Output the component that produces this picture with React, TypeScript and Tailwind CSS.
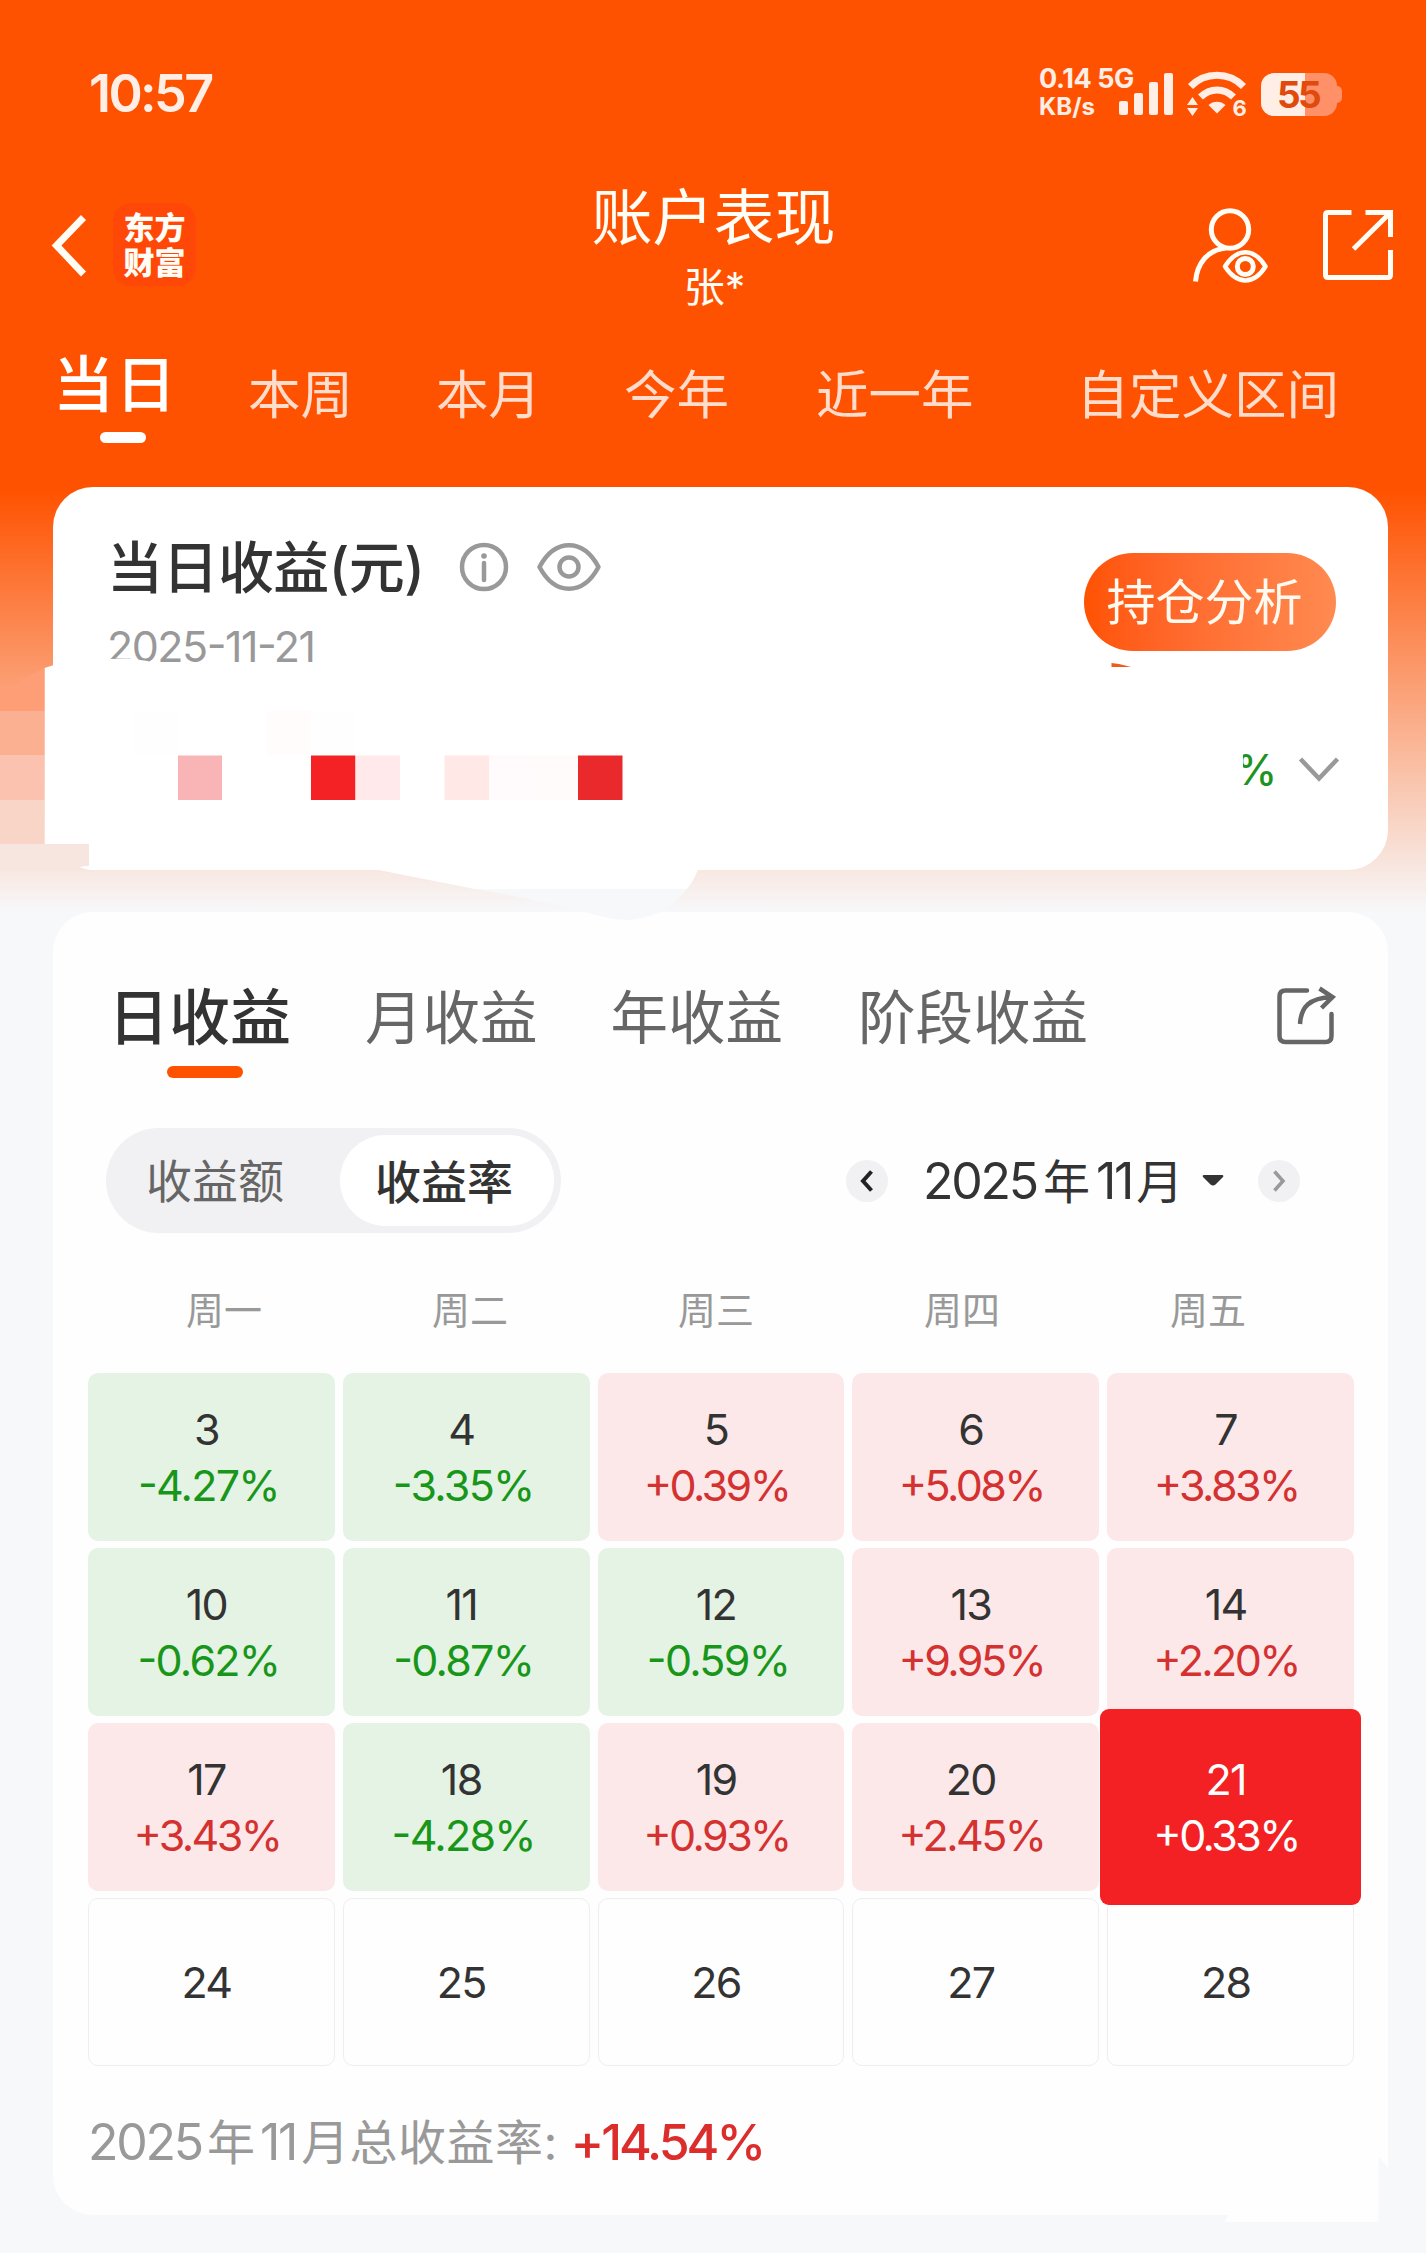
import clsx from 'clsx'

const ranges = [
  { label: '本周', className: 'ml-[73px]' },
  { label: '本月', className: 'ml-[83px]' },
  { label: '今年', className: 'ml-[83px]' },
  { label: '近一年', className: 'ml-[87px]' },
  { label: '自定义区间', className: 'ml-[103px]' },
]

const weekdays = ['周一', '周二', '周三', '周四', '周五']

const days: { day: number; rate?: string; selected?: boolean }[] = [
  { day: 3, rate: '-4.27%' },
  { day: 4, rate: '-3.35%' },
  { day: 5, rate: '+0.39%' },
  { day: 6, rate: '+5.08%' },
  { day: 7, rate: '+3.83%' },
  { day: 10, rate: '-0.62%' },
  { day: 11, rate: '-0.87%' },
  { day: 12, rate: '-0.59%' },
  { day: 13, rate: '+9.95%' },
  { day: 14, rate: '+2.20%' },
  { day: 17, rate: '+3.43%' },
  { day: 18, rate: '-4.28%' },
  { day: 19, rate: '+0.93%' },
  { day: 20, rate: '+2.45%' },
  { day: 21, rate: '+0.33%', selected: true },
  { day: 24 },
  { day: 25 },
  { day: 26 },
  { day: 27 },
  { day: 28 },
]

function StatusBar() {
  return (
    <div className="flex h-[188px] items-center justify-between pl-[89px] pr-[84px] text-[#ffeee6]">
      <span className="text-[52px] font-semibold leading-none tracking-[-0.05em]">10:57</span>
      <div className="flex items-center">
        <div className="mb-[4px] w-[80px] whitespace-nowrap font-bold">
          <div className="text-[27px] leading-[29px] tracking-[-0.015em]">0.14 5G</div>
          <div className="text-[24px] leading-[27px]">KB/s</div>
        </div>
        {/* signal */}
        <svg className="h-[46px] w-[56px]" viewBox="0 0 56 46" fill="currentColor">
          <rect x="0" y="30" width="9" height="14" rx="2" />
          <rect x="15" y="22" width="9" height="22" rx="2" />
          <rect x="30" y="11" width="9" height="33" rx="2" />
          <rect x="45" y="2" width="9" height="42" rx="2" />
        </svg>
        {/* wifi 6 */}
        <svg className="ml-[11px] h-[50px] w-[62px] overflow-visible" viewBox="0 0 62 50" fill="none" stroke="currentColor">
          <path d="M4.500 17.500C19 2.500 43 2.500 57.500 17.500" strokeWidth="7" />
          <path d="M14.500 28C24 18.500 38 18.500 47.500 28" strokeWidth="7" />
          <path d="M22.500 36C27 31.500 35 31.500 39.500 36L31 44.500Z" fill="currentColor" stroke="none" />
          <path d="M1 36 6.500 28 12 36ZM1 39 6.500 47 12 39Z" fill="currentColor" stroke="none" />
          <text x="46.500" y="47" fontSize="22" fontWeight="700" fill="currentColor" stroke="none">6</text>
        </svg>
        {/* battery */}
        <div className="ml-[13px] flex items-center">
          <div className="flex h-[43px] w-[76px] items-center justify-center rounded-[13px] bg-[linear-gradient(90deg,#ffeee6_44px,#ff9068_44px)] pr-[2px] text-[37px] font-bold leading-none tracking-[-0.07em] text-[#e04a0c]">
            55
          </div>
          <div className="h-[17px] w-[5px] rounded-r-[5px] bg-[#ff9068]" />
        </div>
      </div>
    </div>
  )
}

function Header() {
  return (
    <div className="flex h-[152px] items-start justify-between pl-[49px] pr-[29px] text-[#fffdf5]">
      <div className="flex w-[250px] items-center pt-[15px]">
        <svg className="h-[64px] w-[40px]" viewBox="0 0 40 64" fill="none" stroke="currentColor" strokeWidth="7">
          <path d="M34.500 4.500 7.500 32.500 34.500 61" />
        </svg>
        <div className="ml-[24px] flex size-[83px] flex-col items-center justify-center rounded-[18px] bg-[#ff4808] text-[31px] font-black leading-[35px]">
          <span>东方</span>
          <span>财富</span>
        </div>
      </div>
      <div className="mr-[19px] text-center">
        <h1 className="mt-[-6px] text-[61px] leading-[72px]">账户表现</h1>
        <p className="pl-[2px] text-[41px] leading-[67px]">张*</p>
      </div>
      <div className="flex w-[250px] justify-end pt-[16px]">
        <svg className="h-[84px] w-[80px]" viewBox="0 0 80 84" fill="none" stroke="currentColor" strokeWidth="5">
          <circle cx="39" cy="25.500" r="18.700" />
          <path d="M4.500 77.500C6 60 16 46 35 44" />
          <path d="M34 62.500C46 43.500 63 43.500 74.500 62.500 63 81 46 81 34 62.500Z" strokeWidth="4.500" strokeLinejoin="round" />
          <circle cx="54.300" cy="62.500" r="8" />
        </svg>
        <svg className="ml-[50px] h-[76px] w-[76px]" viewBox="0 0 76 76" fill="none" stroke="currentColor" strokeWidth="5">
          <path d="M30.500 8.500H7Q4.500 8.500 4.500 11V71Q4.500 73.500 7 73.500H67Q69.500 73.500 69.500 71V46M44.500 8.500H69.500V33M69 9 32.500 45" />
        </svg>
      </div>
    </div>
  )
}

function RangeTabs() {
  return (
    <div className="flex h-[147px] pl-[53px] text-[52.500px] leading-[80px] text-[#ffdccb]">
      <div className="w-[122px] text-[61px] text-white">
        <div className="mt-[5px] whitespace-nowrap font-medium tracking-[0.02em]">当日</div>
        <div className="ml-[47px] mt-[7px] h-[11px] w-[46px] rounded-full bg-white" />
      </div>
      {ranges.map(r => (
        <div key={r.label} className={clsx('mt-[15px] whitespace-nowrap', r.className)}>
          {r.label}
        </div>
      ))}
    </div>
  )
}

function TodayCard() {
  return (
    <section className="relative z-10 ml-[53px] flex h-[383px] w-[1335px] justify-between rounded-[40px] bg-white">
      <div className="pl-[54px] pt-[46px]">
        <div className="flex items-center">
          <h2 className="text-[56px] font-medium leading-[70px] tracking-[-0.01em] text-[#333]">当日收益(元)</h2>
          <svg className="mb-[3px] ml-[35px] size-[50px]" viewBox="0 0 50 50" fill="none" stroke="#999" strokeWidth="4.500">
            <circle cx="25" cy="25" r="22" />
            <path d="M25 21V38" strokeLinecap="round" />
            <circle cx="25" cy="14" r="2.800" fill="#999" stroke="none" />
          </svg>
          <svg className="mb-[3px] ml-[27px] h-[50px] w-[66px]" viewBox="0 0 66 50" fill="none" stroke="#999" strokeWidth="4.500">
            <path d="M3.500 25C19 -4 47 -4 62.500 25 47 54 19 54 3.500 25Z" strokeLinejoin="round" />
            <circle cx="33" cy="25" r="9.500" />
          </svg>
        </div>
        <p className="mt-[18px] text-[43px] leading-[50px] tracking-[-0.035em] text-[#999] [font-feature-settings:'case']">2025-11-21</p>
      </div>
      <div className="flex flex-col items-end pr-[47px] pt-[66px]">
        <button className="mr-[5px] h-[98px] w-[252px] rounded-full bg-gradient-to-r from-[#ff5200] to-[#ff8a50] pr-[11px] text-[49px] leading-[100px] text-[#fffaf0]">
          持仓分析
        </button>
        <div className="mt-[99px] flex items-center">
          {/* the mask hides the left rim of the percent sign */}
          <div className="relative text-[42px] font-medium leading-[40px] text-[#1f931f]">
            %
            <span className="absolute left-0 top-0 h-[40px] w-[8px] bg-white" />
          </div>
          <svg className="ml-[20px] h-[28px] w-[44px]" viewBox="0 0 44 28" fill="none" stroke="#999" strokeWidth="4.500">
            <path d="M3.500 3 22 22.500 40.500 3" />
          </svg>
        </div>
      </div>
      <Mosaic />
    </section>
  )
}

// privacy mask painted over the amount and the card's left edge
function Mosaic() {
  return (
    <svg className="pointer-events-none absolute left-[-53px] top-0 h-[440px] w-[1200px]" viewBox="0 487 1200 440">
      <path d="M44.500 668 54 665H110V659L128 658.500 148 661 152 665V850H44.500Z" fill="#fff" />
      <path d="M0 690 44.500 668V711H0Z" fill="#fd9e77" />
      <path d="M0 711H44.500V755H0Z" fill="#fcb092" />
      <path d="M0 755H44.500V800H0Z" fill="#fbc3af" />
      <path d="M0 800H44.500V844H0Z" fill="#f9d5c8" />
      <path d="M0 844H89V866L80 867 89 870H0Z" fill="#f7e6e0" />
      <path d="M89 820H160V870H89L80 867 89 866Z" fill="#fff" />
      <path d="M133 711H178V755H133Z" fill="#fefefe" />
      <path d="M267 711H311V755H267Z" fill="#fffcfb" />
      <path d="M311 711H355V755H311Z" fill="#fefefe" />
      <path d="M178 755.500H222V800H178Z" fill="#f9b5b5" />
      <path d="M311 755.500H355.500V800H311Z" fill="#f42224" />
      <path d="M355.500 755.500H400V800H355.500Z" fill="#ffe9ea" />
      <path d="M444.500 755.500H489V800H444.500Z" fill="#ffe8e6" />
      <path d="M489 755.500H533V800H489Z" fill="#fffafb" />
      <path d="M533 755.500H578V800H533Z" fill="#fffbfa" />
      <path d="M578 755.500H622.500V800H578Z" fill="#ea292c" />
      <path d="M376 869.500H698Q694 880 687 889H475Z" fill="#fff" />
      <path d="M475 889H687Q664 919 625 920 608 919 585 912 530 898 475 889Z" fill="#f7f8fa" />
      <path d="M1111.500 663 1119 664 1131 667H1111.500Z" fill="#ef5a1c" />
    </svg>
  )
}

function ProfitTabs() {
  return (
    <div className="flex h-[216px] pl-[55px] pt-[61px] text-[57.500px] leading-[90px] text-[#666]">
      <div className="w-[183px] text-[61px] font-medium text-[#333]">
        <div className="whitespace-nowrap">日收益</div>
        <div className="ml-[59px] mt-[3px] h-[12px] w-[76px] rounded-[6px] bg-[#ff5200]" />
      </div>
      <div className="ml-[74px]">月收益</div>
      <div className="ml-[73px]">年收益</div>
      <div className="ml-[75px]">阶段收益</div>
      <svg className="ml-[187px] mt-[12px] h-[62px] w-[62px]" viewBox="0 0 62 62" fill="none" stroke="#666" strokeWidth="4.500">
        <path d="M32 5.500H10.500Q4.500 5.500 4.500 11.500V51Q4.500 57 10.500 57H50.500Q56.500 57 56.500 51V29" strokeLinecap="round" />
        <path d="M25 39C26 22 34 13 57 12M44.500 3.500 57.500 12 46.500 23" />
      </svg>
    </div>
  )
}

function Controls() {
  return (
    <div className="flex h-[105px] items-center pl-[53px]">
      <div className="flex h-[105px] w-[455px] items-center rounded-full bg-[#f1f1f3] text-[46px]">
        <div className="w-[234px] pl-[40px] leading-[94px] text-[#666]">收益额</div>
        <div className="h-[91px] w-[214px] rounded-full bg-white pl-[35px] font-medium leading-[94px] text-[#333]">收益率</div>
      </div>
      <div className="ml-[285px] flex size-[42px] items-center justify-center rounded-full bg-[#f1f1f4]">
        <svg className="h-[22px] w-[14px]" viewBox="0 0 14 22" fill="none" stroke="#222" strokeWidth="4">
          <path d="M11.500 1.500 3 11 11.500 20.500" />
        </svg>
      </div>
      <div className="ml-[35px] mt-[2px] flex w-[256px] items-baseline whitespace-nowrap text-[47px] leading-[60px] text-[#333]">
        <span className="text-[50px] tracking-[-0.045em]">2025</span>
        <span className="mx-[6px]">年</span>
        <span className="text-[50px] tracking-[-0.045em]">11</span>
        <span className="ml-[4px]">月</span>
      </div>
      <svg className="ml-[23px] h-[11px] w-[22px]" viewBox="0 0 22 11" fill="#333">
        <path d="M2 0H20Q22 0 21 2L13.500 9.500Q11 11.500 8.500 9.500L1 2Q0 0 2 0Z" />
      </svg>
      <div className="ml-[34px] flex size-[42px] items-center justify-center rounded-full bg-[#f1f1f4]">
        <svg className="h-[22px] w-[14px]" viewBox="0 0 14 22" fill="none" stroke="#999" strokeWidth="3.500">
          <path d="M2.500 1.500 11 11 2.500 20.500" />
        </svg>
      </div>
    </div>
  )
}

function Calendar() {
  return (
    <div className="grid w-[1266px] grid-cols-5 gap-x-[8px] gap-y-[7px]">
      {days.map(d => (
        <div
          key={d.day}
          className={clsx(
            'flex h-[168px] flex-col items-center justify-center pr-[10px] text-[43px] leading-[56px]',
            !d.rate && 'rounded-[10px] border-[1.5px] border-[#eee]',
            d.rate && !d.selected && 'rounded-[10px]',
            d.rate?.startsWith('-') && 'bg-[#e5f3e4]',
            d.rate?.startsWith('+') && !d.selected && 'bg-[#fce8e8]',
            d.selected ? 'z-10 -mx-[7px] -my-[14px] h-[196px] rounded-[9px] bg-[#f32123] text-white' : 'text-[#333]'
          )}
        >
          <div className="tracking-[-0.04em]">{d.day}</div>
          {d.rate && (
            <div
              className={clsx(
                "[font-feature-settings:'case']",
                d.rate.startsWith('-') ? 'pl-[4px] tracking-[-0.04em]' : 'pl-[1px] tracking-[-0.06em]',
                !d.selected && (d.rate.startsWith('-') ? 'text-[#18961a]' : 'text-[#d43131]')
              )}
            >
              {d.rate}
            </div>
          )}
        </div>
      ))}
    </div>
  )
}

function ProfitCard() {
  return (
    <section className="relative ml-[53px] mt-[42px] h-[1303px] w-[1335px] rounded-[40px] rounded-br-none bg-[#fefefe]">
      <ProfitTabs />
      <Controls />
      <div className="ml-[48px] mt-[52px] flex w-[1230px] text-center text-[38px] leading-[50px] text-[#999]">
        {weekdays.map(w => (
          <div key={w} className="w-[246px]">{w}</div>
        ))}
      </div>
      <div className="ml-[35px] mt-[38px]">
        <Calendar />
      </div>
      <div className="ml-[35px] mt-[41px] flex items-baseline whitespace-nowrap text-[48px] leading-[70px] text-[#999]">
        <span className="text-[50px] tracking-[-0.045em]">2025</span>
        <span className="mx-[5px]">年</span>
        <span className="text-[50px] tracking-[-0.045em]">11</span>
        <span className="ml-[5px] tracking-[0.01em]">月总收益率:</span>
        <span className="ml-[13px] text-[50px] font-medium tracking-[-0.06em] text-[#dc2d2d]">+14.54%</span>
      </div>
      <svg className="absolute -bottom-[7px] right-0 h-[66px] w-[163px]" viewBox="0 0 163 66">
        <path d="M153.500 0 163 12V66H153.500Z" fill="#f7f8fa" />
        <path d="M3 58.500H153.500V66H0Z" fill="#fefefe" />
      </svg>
    </section>
  )
}

export default function App() {
  return (
    <div className="h-[2253px] w-[1426px] overflow-hidden bg-[linear-gradient(#ff5200_490px,#f7f8fa_912px)] font-['Inter','Noto_Sans_CJK_SC',sans-serif]">
      <StatusBar />
      <Header />
      <RangeTabs />
      <TodayCard />
      <ProfitCard />
    </div>
  )
}
